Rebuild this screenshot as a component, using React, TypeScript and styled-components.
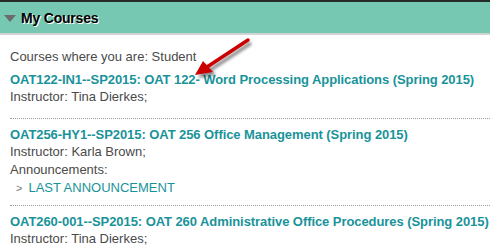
import * as React from "react";
import styled, { createGlobalStyle } from "styled-components";

const GlobalStyle = createGlobalStyle`
  html, body {
    margin: 0;
    padding: 0;
    background: #fff;
  }
  body {
    font-family: "Liberation Sans", Arial, sans-serif;
  }
`;

const Module = styled.div`
  position: relative;
  width: 490px;
  height: 249px;
  overflow: hidden;
  border-top: 2px solid #262b2a;
`;

const Header = styled.div`
  display: flex;
  align-items: center;
  gap: 5px;
  height: 31px;
  padding-left: 4px;
  background: #76c8b2;
  border-bottom: 2px solid #cfd3d2;
`;

const Caret = styled.span`
  width: 0;
  height: 0;
  border-left: 6px solid transparent;
  border-right: 6px solid transparent;
  border-top: 7px solid #6b6b6b;
  margin-top: 1px;
`;

const Title = styled.h2`
  margin: 0;
  font-size: 14px;
  font-weight: bold;
  letter-spacing: -0.2px;
  color: #000;
  text-shadow: 1px 1px 0 #fff;
`;

const Body = styled.div`
  padding: 13px 0 0 10px;
  font-size: 13px;
  color: #4a4a4a;
`;

const Intro = styled.div`
  line-height: 18px;
  margin-bottom: 5px;
`;

const Course = styled.div<{ $last?: boolean }>`
  padding-bottom: 8px;
  margin-bottom: 7px;
  border-bottom: ${(p) => (p.$last ? "none" : "1px dotted #9c9c9c")};
`;

const CourseLink = styled.a`
  display: block;
  font-weight: bold;
  letter-spacing: -0.07px;
  color: #19939a;
  text-decoration: none;
  line-height: 17px;
  white-space: nowrap;
`;

const Line = styled.div`
  line-height: 18px;

  &:last-child {
    margin-bottom: 4px;
  }
`;

const Announcement = styled.div`
  display: flex;
  align-items: center;
  gap: 6px;
  padding-left: 6px;
  line-height: 18px;
  color: #19939a;
`;

const Chevron = styled.span`
  color: #777;
  font-size: 11px;
`;

const Arrow = styled.svg`
  position: absolute;
  left: 190px;
  top: 32px;
`;

export default function App() {
  return (
    <Module>
      <GlobalStyle />
      <Header>
        <Caret />
        <Title>My Courses</Title>
      </Header>
      <Body>
        <Intro>Courses where you are: Student</Intro>
        <Course>
          <CourseLink href="#">
            OAT122-IN1--SP2015: OAT 122- Word Processing Applications (Spring 2015)
          </CourseLink>
          <Line>Instructor: Tina Dierkes;</Line>
        </Course>
        <Course>
          <CourseLink href="#">
            OAT256-HY1--SP2015: OAT 256 Office Management (Spring 2015)
          </CourseLink>
          <Line>Instructor: Karla Brown;</Line>
          <Line>Announcements:</Line>
          <Announcement>
            <Chevron>&gt;</Chevron>
            LAST ANNOUNCEMENT
          </Announcement>
        </Course>
        <Course $last>
          <CourseLink href="#">
            OAT260-001--SP2015: OAT 260 Administrative Office Procedures (Spring 2015)
          </CourseLink>
          <Line>Instructor: Tina Dierkes;</Line>
        </Course>
      </Body>
      <Arrow width="70" height="50" viewBox="0 0 70 50">
        <defs>
          <filter id="sh" x="-30%" y="-30%" width="160%" height="160%">
            <feGaussianBlur stdDeviation="1.6" />
          </filter>
        </defs>
        <g transform="translate(3 3)" opacity="0.45" filter="url(#sh)">
          <line x1="58" y1="6" x2="17" y2="33" stroke="#000" strokeWidth="3.5" />
          <polygon points="5,41 13,27 23,38" fill="#000" />
        </g>
        <line x1="58" y1="6" x2="17" y2="33" stroke="#cc0000" strokeWidth="3.5" strokeLinecap="round" />
        <polygon points="5,41 13,27 23,38" fill="#cc0000" />
      </Arrow>
    </Module>
  );
}
